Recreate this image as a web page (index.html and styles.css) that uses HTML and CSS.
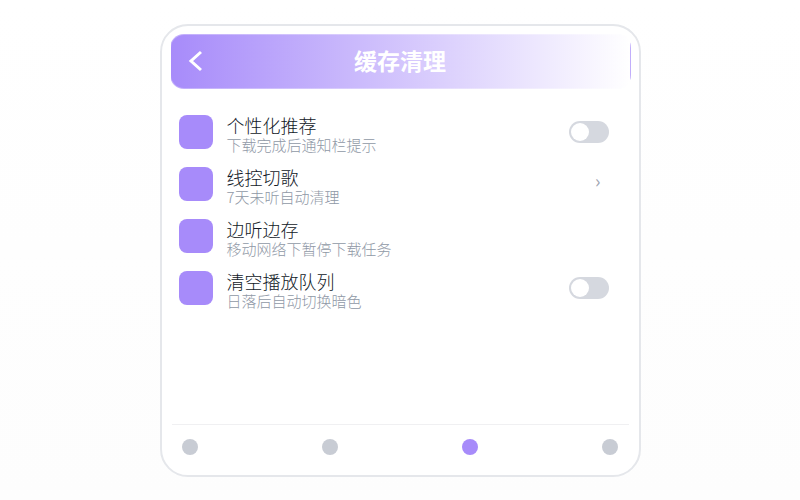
FILE: index.html
```html
<!DOCTYPE html>
<html lang="zh-CN">
<head>
    <meta charset="UTF-8">
    <meta name="viewport" content="width=device-width, initial-scale=1.0">
    <title>缓存清理</title>
    <link rel="stylesheet" href="styles.css">
</head>
<body>
    <main class="card">
        <header class="header">
            <button class="back" type="button" aria-label="返回">
                <svg width="24" height="24" viewBox="0 0 24 24" fill="none" stroke="#fff" stroke-width="3">
                    <path d="M18 3L8 12L18 21"/>
                </svg>
            </button>
            <h1 class="title">缓存清理</h1>
        </header>

        <ul class="list">
            <li class="row">
                <span class="icon"></span>
                <label class="text" for="recommend">
                    <span class="name">个性化推荐</span>
                    <span class="desc">下载完成后通知栏提示</span>
                </label>
                <input class="switch" type="checkbox" id="recommend">
            </li>
            <li class="row">
                <span class="icon"></span>
                <div class="text">
                    <span class="name">线控切歌</span>
                    <span class="desc">7天未听自动清理</span>
                </div>
                <a class="more" href="#" aria-label="线控切歌">›</a>
            </li>
            <li class="row">
                <span class="icon"></span>
                <div class="text">
                    <span class="name">边听边存</span>
                    <span class="desc">移动网络下暂停下载任务</span>
                </div>
            </li>
            <li class="row">
                <span class="icon"></span>
                <label class="text" for="queue">
                    <span class="name">清空播放队列</span>
                    <span class="desc">日落后自动切换暗色</span>
                </label>
                <input class="switch" type="checkbox" id="queue">
            </li>
        </ul>

        <!-- bottom tabs -->
        <nav class="tabs">
            <a class="tab" href="#" aria-label="1"></a>
            <a class="tab" href="#" aria-label="2"></a>
            <a class="tab active" href="#" aria-label="3"></a>
            <a class="tab" href="#" aria-label="4"></a>
        </nav>
    </main>
</body>
</html>
```
FILE: styles.css
```css
* {
    box-sizing: border-box;
}

body {
    margin: 0;
    min-height: 100vh;
    padding: 24px 24px 23px;
    display: flex;
    justify-content: center;
    background: linear-gradient(#fff, #fdfdfd);
    font-family: "Noto Sans CJK SC", sans-serif;
    font-weight: 300;
    color: #111827;
}

.card {
    width: 100%;
    max-width: 481px;
    display: flex;
    flex-direction: column;
    padding: 8px;
    border: 2px solid #e5e7eb;
    border-radius: 28px;
    background: #fff;
}

.header {
    display: grid;
    grid-template-columns: 48px 1fr 48px;
    align-items: center;
    height: 55px;
    padding-bottom: 2px;
    border: 1px solid rgba(255, 255, 255, 0.3);
    border-radius: 14px;
    background: linear-gradient(90deg, #a78bfa, #fff);
}

.back {
    display: flex;
    justify-content: center;
    padding: 0;
    border: 0;
    background: none;
    cursor: pointer;
}

.title {
    margin: 0;
    padding-bottom: 2px;
    text-align: center;
    font-size: 23px;
    line-height: 32px;
    font-weight: 700;
    color: #fff;
}

.list {
    flex: 1;
    margin: 0;
    padding: 17px 22px 0 9px;
    list-style: none;
}

.row {
    display: flex;
    align-items: center;
    gap: 14px;
    height: 52px;
}

.icon {
    width: 34px;
    height: 34px;
    border-radius: 8px;
    background: #a78bfa;
}

.text {
    flex: 1;
    display: flex;
    flex-direction: column;
    padding-top: 6px;
}

.name {
    font-size: 18px;
    line-height: 20px;
}

.desc {
    font-size: 15px;
    line-height: 20px;
    color: #8f98a6;
}

.switch {
    appearance: none;
    width: 40px;
    height: 22px;
    margin: 0;
    padding: 2px;
    border-radius: 11px;
    background: #d5d8df;
    cursor: pointer;
}

.switch::before {
    content: "";
    display: block;
    width: 18px;
    height: 18px;
    border-radius: 50%;
    background: #fff;
}

.switch:checked {
    background: #a78bfa;
}

.switch:checked::before {
    margin-left: auto;
}

.more {
    padding: 0 8px 8px 0;
    font-size: 18px;
    line-height: 20px;
    font-weight: 400;
    color: #9ca3af;
    text-decoration: none;
}

.tabs {
    display: flex;
    justify-content: space-between;
    margin: 0 2px;
    padding: 14px 10px 12px;
    border-top: 1px solid #f0f0f2;
}

.tab {
    width: 16px;
    height: 16px;
    border-radius: 50%;
    background: #c8ccd4;
}

.tab.active {
    background: #a78bfa;
}
```
